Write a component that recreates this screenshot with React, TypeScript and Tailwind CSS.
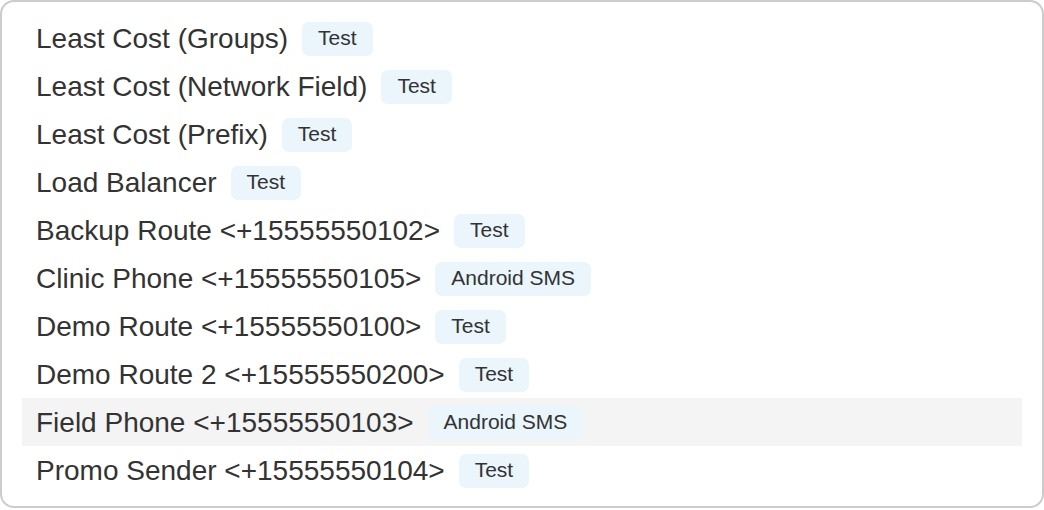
const routes: { name: string; tag: string; active?: boolean }[] = [
  { name: "Least Cost (Groups)", tag: "Test" },
  { name: "Least Cost (Network Field)", tag: "Test" },
  { name: "Least Cost (Prefix)", tag: "Test" },
  { name: "Load Balancer", tag: "Test" },
  { name: "Backup Route <+15555550102>", tag: "Test" },
  { name: "Clinic Phone <+15555550105>", tag: "Android SMS" },
  { name: "Demo Route <+15555550100>", tag: "Test" },
  { name: "Demo Route 2 <+15555550200>", tag: "Test" },
  { name: "Field Phone <+15555550103>", tag: "Android SMS", active: true },
  { name: "Promo Sender <+15555550104>", tag: "Test" },
];

export default function App() {
  return (
    <div
      className="w-[1044px] h-[510px] bg-white"
      style={{ fontFamily: '"Liberation Sans", Arial, sans-serif' }}
    >
      <div className="h-[508px] border-2 border-[#cccccc] rounded-[14px] px-[20px] py-[12px]">
        <ul>
          {routes.map((r) => (
            <li
              key={r.name}
              className={`flex items-center gap-[14px] h-[48px] pl-[14px] ${
                r.active ? "bg-[#f4f4f4]" : ""
              }`}
            >
              <span className="text-[28px] leading-none text-[#333333] pt-[1px]">{r.name}</span>
              <span className="flex items-center h-[34px] px-[16px] rounded-[7px] bg-[#eaf5fc] text-[21px] leading-none text-[#333333] pb-[3px] mt-[1px]">
                {r.tag}
              </span>
            </li>
          ))}
        </ul>
      </div>
    </div>
  );
}
